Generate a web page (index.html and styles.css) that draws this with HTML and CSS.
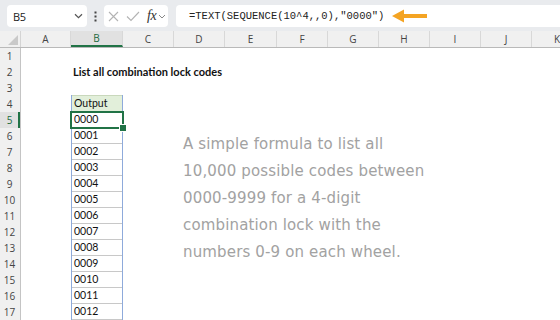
FILE: index.html
```html
<!DOCTYPE html>
<html>
<head>
<meta charset="utf-8">
<link rel="stylesheet" href="styles.css">
</head>
<body>
<div class="app">
  <div class="toolbar">
    <div class="namebox">
      <span class="nb-text">B5</span>
      <svg class="chev" width="9" height="6" viewBox="0 0 9 6"><path d="M1 1.2 L4.5 4.6 L8 1.2" fill="none" stroke="#555" stroke-width="1.2"/></svg>
    </div>
    <div class="dots">
      <svg width="3" height="11" viewBox="0 0 3 11"><rect x="0.5" y="0.5" width="2" height="2" fill="#444"/><rect x="0.5" y="4.5" width="2" height="2" fill="#444"/><rect x="0.5" y="8.5" width="2" height="2" fill="#444"/></svg>
    </div>
    <div class="fxbox">
      <svg class="ic-x" width="11" height="11" viewBox="0 0 11 11"><path d="M1 1 L10 10 M10 1 L1 10" stroke="#b3b3b3" stroke-width="1.1" fill="none"/></svg>
      <svg class="ic-ok" width="14" height="11" viewBox="0 0 14 11"><path d="M1 5.5 L5 9.5 L13 1" stroke="#b3b3b3" stroke-width="1.1" fill="none"/></svg>
      <span class="fx">fx</span>
      <svg class="chev2" width="8" height="5" viewBox="0 0 8 5"><path d="M1 1 L4 4 L7 1" fill="none" stroke="#888" stroke-width="1"/></svg>
    </div>
    <div class="formula">
      <span class="ftext">=TEXT(SEQUENCE(10^4,,0),"0000")</span>
      <svg class="arrow" width="36" height="14" viewBox="0 0 36 14"><path d="M0 7 L12 0.5 L12 5 L35 5 L35 9 L12 9 L12 13.5 Z" fill="#f4a423"/></svg>
    </div>
  </div>

  <div class="colheads">
    <div class="corner"><svg width="10" height="10" viewBox="0 0 10 10"><path d="M10 0 L10 10 L0 10 Z" fill="#c9c9c9"/></svg></div>
    <div class="ch w50">A</div>
    <div class="ch w52 sel">B</div>
    <div class="ch">C</div>
    <div class="ch">D</div>
    <div class="ch w52">E</div>
    <div class="ch">F</div>
    <div class="ch">G</div>
    <div class="ch">H</div>
    <div class="ch">I</div>
    <div class="ch">J</div>
    <div class="ch">K</div>
  </div>

  <div class="body">
    <div class="rowheads">
      <div class="rh">1</div>
      <div class="rh">2</div>
      <div class="rh">3</div>
      <div class="rh">4</div>
      <div class="rh sel">5</div>
      <div class="rh">6</div>
      <div class="rh">7</div>
      <div class="rh">8</div>
      <div class="rh">9</div>
      <div class="rh">10</div>
      <div class="rh">11</div>
      <div class="rh">12</div>
      <div class="rh">13</div>
      <div class="rh">14</div>
      <div class="rh">15</div>
      <div class="rh">16</div>
      <div class="rh">17</div>
    </div>
    <div class="cells">
      <div class="row-space"></div>
      <div class="title">List all combination lock codes</div>
      <div class="row-space short"></div>
      <div class="table">
        <div class="cell head">Output</div>
        <div class="cell active">0000</div>
        <div class="cell">0001</div>
        <div class="cell">0002</div>
        <div class="cell">0003</div>
        <div class="cell">0004</div>
        <div class="cell">0005</div>
        <div class="cell">0006</div>
        <div class="cell">0007</div>
        <div class="cell">0008</div>
        <div class="cell">0009</div>
        <div class="cell">0010</div>
        <div class="cell">0011</div>
        <div class="cell">0012</div>
      </div>
      <div class="note">A simple formula to list all<br>10,000 possible codes between<br>0000-9999 for a 4-digit<br>combination lock with the<br>numbers 0-9 on each wheel.</div>
    </div>
  </div>
</div>
</body>
</html>
```

FILE: styles.css
```css
* { box-sizing: border-box; }
html, body { margin: 0; padding: 0; }
body {
  width: 560px;
  height: 320px;
  overflow: hidden;
  background: #fff;
  font-family: "Open Sans", "Noto Sans", sans-serif;
  color: #222;
}
.app { width: 560px; height: 320px; overflow: hidden; }

.toolbar {
  height: 31px;
  background: #e9ebee;
  display: flex;
  align-items: flex-start;
  padding: 5px 0 0 7px;
}
.namebox {
  width: 80px;
  height: 22px;
  background: #fff;
  border-radius: 4px;
  display: flex;
  align-items: center;
  justify-content: space-between;
  padding: 0 4px 0 6px;
}
.nb-text { font-size: 11px; color: #222; letter-spacing: -0.3px; }
.dots {
  width: 17px;
  height: 22px;
  display: flex;
  align-items: center;
  justify-content: center;
}
.fxbox {
  width: 64px;
  height: 22px;
  background: #fff;
  border-radius: 4px;
  display: flex;
  align-items: center;
  padding-left: 4px;
}
.ic-x { margin-right: 7px; }
.ic-ok { margin-right: 7px; }
.fx {
  font-family: "Liberation Serif", serif;
  font-style: italic;
  font-size: 14px;
  color: #333;
  letter-spacing: -0.5px;
  margin-right: 2px;
  line-height: 14px;
}
.formula {
  flex: 1;
  height: 22px;
  margin-left: 8px;
  margin-right: -6px;
  background: #fff;
  border-radius: 4px;
  display: flex;
  align-items: center;
  padding-left: 13px;
}
.ftext {
  font-family: "Liberation Mono", monospace;
  font-size: 10.5px;
  color: #222;
  white-space: nowrap;
}
.arrow { margin-left: 8px; }

.colheads {
  height: 17px;
  display: flex;
  background: #f0f0f0;
  border-bottom: 1px solid #b9b9b9;
}
.corner {
  width: 21px;
  flex: none;
  border-right: 1px solid #d4d4d4;
  display: flex;
  align-items: flex-end;
  justify-content: flex-end;
  padding: 0 2px 2px 0;
}
.ch {
  width: 51px;
  flex: none;
  border-right: 1px solid #d8d8d8;
  font-size: 10px;
  color: #444;
  text-align: center;
  line-height: 16px;
}
.ch.w50 { width: 50px; }
.ch.w52 { width: 52px; }
.ch.sel {
  background: #e1e1e1;
  color: #1b6a3d;
  border-bottom: 2px solid #217346;
  line-height: 15px;
}

.body { display: flex; height: 272px; }
.rowheads {
  width: 21px;
  flex: none;
  background: #f0f0f0;
  border-right: 1px solid #c4c4c4;
}
.rh {
  height: 16px;
  font-size: 10px;
  color: #444;
  text-align: center;
  line-height: 16px;
  padding-right: 1px;
}
.rh.sel {
  background: #e1e1e1;
  color: #1b6a3d;
  box-shadow: inset -2px 0 0 #217346;
}

.cells {
  flex: 1;
  position: relative;
  padding-left: 50px;
}
.row-space { height: 16px; }
.row-space.short { height: 15px; }
.title {
  height: 16px;
  line-height: 16px;
  padding-left: 2px;
  font-family: "Lato", sans-serif;
  font-weight: 700;
  font-size: 11px;
  color: #111;
  white-space: nowrap;
}
.table {
  width: 52px;
  border-left: 1px solid #8eaadb;
  border-right: 1px solid #8eaadb;
}
.cell {
  height: 16px;
  border-bottom: 1px solid #c8c8c8;
  font-family: "Lato", sans-serif;
  font-size: 10.5px;
  line-height: 15px;
  padding-left: 2px;
  color: #111;
  position: relative;
}
.cell.head {
  height: 17px;
  background: #e2efda;
  border-top: 1px solid #c9d8bc;
  border-bottom-color: #c9d8bc;
}
.cell.active::after {
  content: "";
  position: absolute;
  left: -2px;
  right: -2px;
  top: -1px;
  bottom: -2px;
  border: 2px solid #217346;
}
.cell.active::before {
  content: "";
  position: absolute;
  right: -5px;
  bottom: -5px;
  width: 6px;
  height: 6px;
  background: #217346;
  border: 1px solid #fff;
  z-index: 2;
}

.note {
  position: absolute;
  left: 162px;
  top: 83px;
  font-family: "DejaVu Sans", sans-serif;
  font-weight: 400;
  font-size: 15px;
  letter-spacing: 0.15px;
  line-height: 27px;
  color: #a2a2a2;
  white-space: nowrap;
}
```
